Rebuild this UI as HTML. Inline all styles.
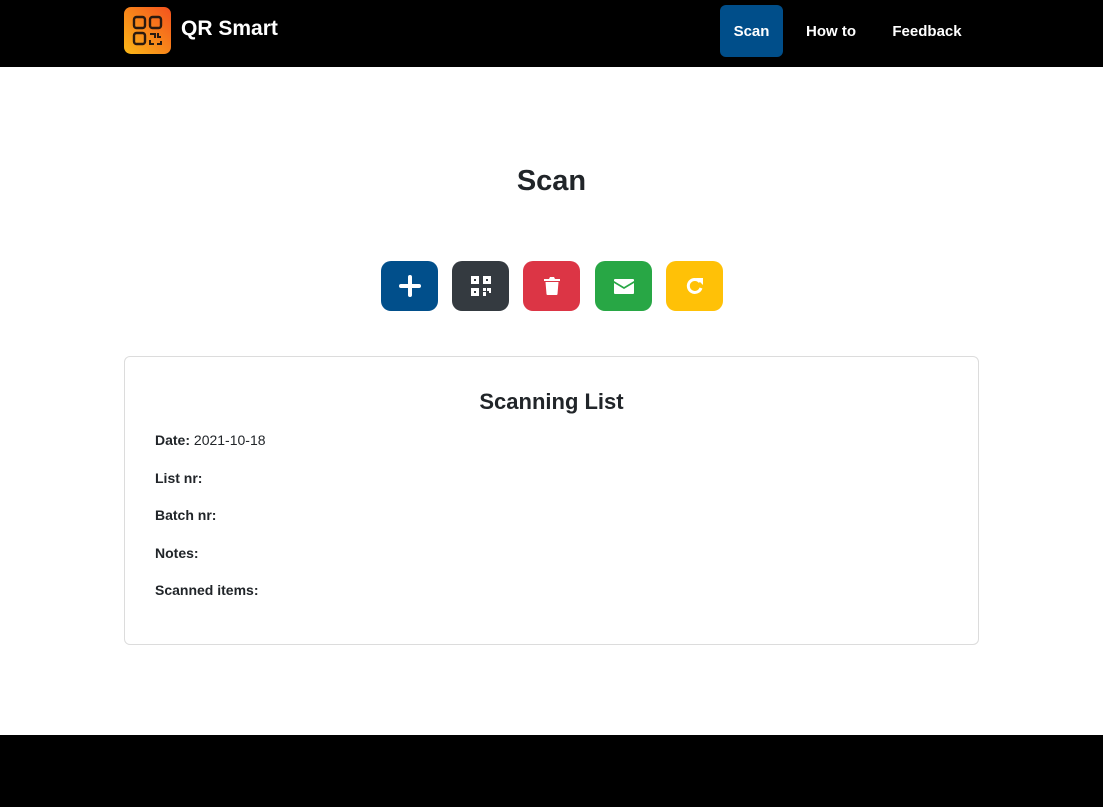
<!DOCTYPE html>
<html><head><meta charset="utf-8"><style>
*{box-sizing:border-box;margin:0;padding:0}
body{width:1103px;height:807px;background:#fff;font-family:"Liberation Sans",sans-serif;color:#212529;position:relative;overflow:hidden}
nav{position:absolute;left:0;top:0;width:1103px;height:67px;background:#000}
.logo{position:absolute;left:124px;top:7px;width:47px;height:47px;border-radius:7px;background:linear-gradient(45deg,#fbb817,#f4511e)}
.brand{position:absolute;left:181px;top:17px;color:#fff;font-weight:bold;font-size:21px}
.nl{position:absolute;top:5px;height:52px;line-height:54px;color:#fff;font-weight:bold;font-size:15px;text-align:center}
h1{position:absolute;top:165px;width:100%;text-align:center;font-size:29px;font-weight:bold}
.b{position:absolute;top:261px;width:57px;height:50px;border-radius:10px;display:flex;align-items:center;justify-content:center}
.card{position:absolute;left:124px;top:356px;width:855px;height:289px;border:1px solid #dcdcdc;border-radius:6px}
.card h2{position:absolute;top:32px;width:100%;text-align:center;font-size:22px;font-weight:bold}
.f{position:absolute;left:30px;font-size:14px}
footer{position:absolute;left:0;top:735px;width:1103px;height:72px;background:#000}
</style></head><body>
<nav>
<div class="logo"><svg width="47" height="47" viewBox="0 0 47 47" fill="none" stroke="#2a1a10" stroke-width="2.4"><rect x="10" y="10" width="11" height="11" rx="2.5"/><rect x="26" y="10" width="11" height="11" rx="2.5"/><rect x="10" y="26" width="11" height="11" rx="2.5"/><path d="M26 27h5v4M34 26v4h3M26 33v4h4M33 37h4v-3" stroke-width="2"/></svg></div>
<div class="brand">QR Smart</div>
<div class="nl" style="left:720px;width:63px;background:#004e8a;border-radius:6px">Scan</div>
<div class="nl" style="left:800px;width:62px">How to</div>
<div class="nl" style="left:886px;width:82px">Feedback</div>
</nav>
<h1>Scan</h1>
<div class="b" style="left:381px;background:#014f8b"><svg width="22" height="22" viewBox="0 0 22 22"><path d="M11 2v18M2 11h18" stroke="#fff" stroke-width="4" stroke-linecap="round"/></svg></div>
<div class="b" style="left:452px;background:#343a40"><svg width="20" height="20" viewBox="0 0 20 20" fill="#fff"><path d="M0 0h8v8H0zM3 3v2h2V3zM12 0h8v8h-8zM15 3v2h2V3zM0 12h8v8H0zM3 15v2h2v-2zM12 12h3v3h-3zM16 12h4v5h-2v-2h-2zM12 16h3v4h-3z"/></svg></div>
<div class="b" style="left:523px;background:#dc3545"><svg width="16" height="18" viewBox="0 0 16 18" fill="#fff"><path d="M0 2h5l1-2h4l1 2h5v2H0zM1.5 5h13l-1 12a1 1 0 0 1-1 1h-9a1 1 0 0 1-1-1z"/></svg></div>
<div class="b" style="left:595px;background:#28a745"><svg width="20" height="15" viewBox="0 0 20 15" fill="#fff"><path d="M1 0h18a1 1 0 0 1 1 1v1L10 8 0 2V1a1 1 0 0 1 1-1zM0 4l10 6 10-6v10a1 1 0 0 1-1 1H1a1 1 0 0 1-1-1z"/></svg></div>
<div class="b" style="left:666px;background:#ffc107"><svg width="18" height="18" viewBox="0 0 18 18"><path d="M14 5A6.5 6.5 0 1 0 15 11" fill="none" stroke="#fff" stroke-width="3"/><path d="M10 1h7v7z" fill="#fff"/></svg></div>
<div class="card">
<h2>Scanning List</h2>
<div class="f" style="top:75px"><b>Date:</b> 2021-10-18</div>
<div class="f" style="top:113px"><b>List nr:</b></div>
<div class="f" style="top:150px"><b>Batch nr:</b></div>
<div class="f" style="top:188px"><b>Notes:</b></div>
<div class="f" style="top:225px"><b>Scanned items:</b></div>
</div>
<footer></footer>
</body></html>
